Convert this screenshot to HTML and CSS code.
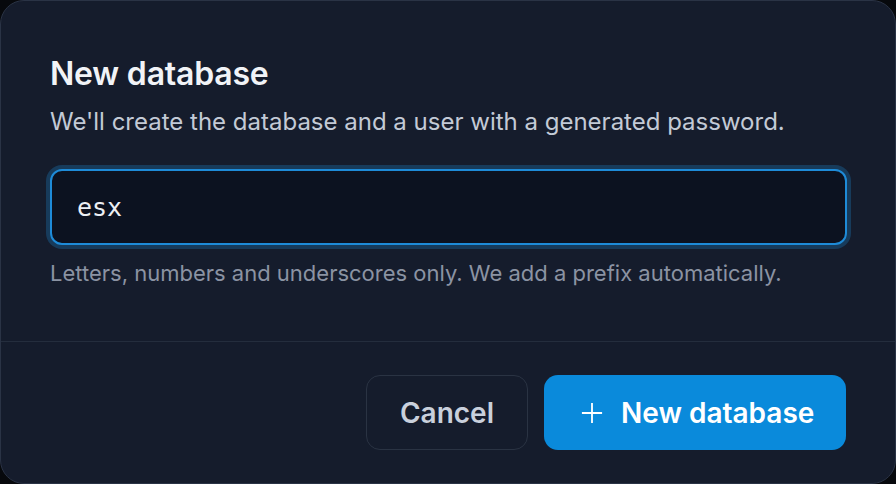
FILE: index.html
```html
<!DOCTYPE html>
<html lang="en">
<head>
<meta charset="utf-8">
<title>New database</title>
<link rel="stylesheet" href="styles.css">
</head>
<body>
<div class="dialog">
  <div class="dialog-body">
    <h1 class="title">New database</h1>
    <p class="subtitle">We'll create the database and a user with a generated password.</p>
    <div class="field">
      <input class="input" type="text" value="esx">
    </div>
    <p class="hint">Letters, numbers and underscores only. We add a prefix automatically.</p>
  </div>
  <div class="dialog-footer">
    <button class="btn btn-secondary" type="button">Cancel</button>
    <button class="btn btn-primary" type="button">
      <svg class="btn-icon" viewBox="0 0 24 24" width="22" height="22" aria-hidden="true">
        <path d="M12 1v22M1 12h22" stroke="currentColor" stroke-width="2" fill="none" stroke-linecap="butt"/>
      </svg>
      <span>New database</span>
    </button>
  </div>
</div>
</body>
</html>
```

FILE: styles.css
```css
* { box-sizing: border-box; }
html, body {
  margin: 0;
  padding: 0;
  height: 100%;
  background: #07090d;
}
body {
  font-family: Inter, "Noto Sans", sans-serif;
}
.dialog {
  height: 484px;
  width: 896px;
  background: #151c2c;
  border: 1px solid #2a3345;
  border-radius: 24px;
  display: flex;
  flex-direction: column;
  overflow: hidden;
}
.dialog-body {
  padding: 53px 49px 0 49px;
  height: 340px;
}
.title {
  margin: 0;
  font-size: 32px;
  line-height: 40px;
  font-weight: 600;
  color: #f1f3f7;
  letter-spacing: -0.2px;
}
.subtitle {
  margin: 12px 0 0 0;
  font-size: 24px;
  line-height: 32px;
  color: #c3cad6;
}
.field {
  margin-top: 31px;
}
.input {
  display: block;
  width: 797px;
  height: 76px;
  padding: 0 25px;
  background: #0c1220;
  border: 2px solid #1e8bd8;
  border-radius: 12px;
  box-shadow: 0 0 0 4px rgba(30, 139, 216, 0.28);
  outline: none;
  color: #eceff4;
  font-family: "DejaVu Sans Mono", "Liberation Mono", monospace;
  font-size: 25px;
}
.hint {
  margin: 13px 0 0 0;
  font-size: 22px;
  line-height: 30px;
  color: #8b93a3;
}
.dialog-footer {
  border-top: 1px solid #242d3d;
  padding: 33px 49px 0 0;
  display: flex;
  justify-content: flex-end;
  gap: 16px;
}
.btn {
  height: 75px;
  border-radius: 14px;
  font-family: Inter, "Noto Sans", sans-serif;
  font-size: 28px;
  font-weight: 600;
  display: inline-flex;
  align-items: center;
  cursor: pointer;
}
.btn-secondary {
  width: 162px;
  justify-content: center;
  background: transparent;
  border: 1.5px solid #2a3343;
  color: #c9d0dc;
}
.btn-primary {
  width: 302px;
  padding: 0 0 0 37px;
  gap: 18px;
  background: #0a8adb;
  border: none;
  color: #ffffff;
}
.btn-icon {
  display: block;
  flex: none;
}
```
